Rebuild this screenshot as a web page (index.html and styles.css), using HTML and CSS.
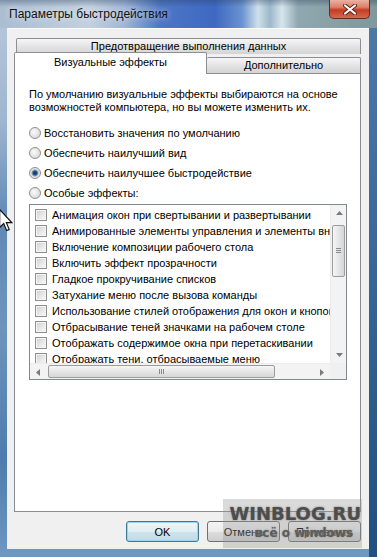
FILE: index.html
```html
<!DOCTYPE html>
<html lang="ru">
<head>
    <meta charset="UTF-8">
    <title>Параметры быстродействия</title>
    <link rel="stylesheet" href="styles.css">
</head>
<body>

    <div class="window">
        <!-- Title bar -->
        <div class="titlebar">
            <span class="title">Параметры быстродействия</span>
            <div class="close">
                <svg width="14" height="11" viewBox="0 0 14 11">
                    <path d="M2 1.5 L12 9.5 M12 1.5 L2 9.5" stroke="#5a2418" stroke-width="4" stroke-linecap="round"/>
                    <path d="M2 1.5 L12 9.5 M12 1.5 L2 9.5" stroke="#fff" stroke-width="2.2" stroke-linecap="round"/>
                </svg>
            </div>
        </div>

        <div class="client">
            <!-- Tabs, two rows -->
            <div class="tabs">
                <div class="tab-row back">
                    <div class="tab">Предотвращение выполнения данных</div>
                </div>
                <div class="tab-row front">
                    <div class="tab active">Визуальные эффекты</div>
                    <div class="tab">Дополнительно</div>
                </div>
            </div>

            <div class="panel">
                <p class="intro">По умолчанию визуальные эффекты выбираются на основе<br>возможностей компьютера, но вы можете изменить их.</p>

                <div class="radios">
                    <div class="radio"><span class="circle"></span>Восстановить значения по умолчанию</div>
                    <div class="radio"><span class="circle"></span>Обеспечить наилучший вид</div>
                    <div class="radio"><span class="circle checked"></span>Обеспечить наилучшее быстродействие</div>
                    <div class="radio"><span class="circle"></span>Особые эффекты:</div>
                </div>

                <div class="listbox">
                    <div class="items">
                        <div class="row"><span class="check"></span>Анимация окон при свертывании и развертывании</div>
                        <div class="row"><span class="check"></span>Анимированные элементы управления и элементы внутри окна</div>
                        <div class="row"><span class="check"></span>Включение композиции рабочего стола</div>
                        <div class="row"><span class="check"></span>Включить эффект прозрачности</div>
                        <div class="row"><span class="check"></span>Гладкое прокручивание списков</div>
                        <div class="row"><span class="check"></span>Затухание меню после вызова команды</div>
                        <div class="row"><span class="check"></span>Использование стилей отображения для окон и кнопок</div>
                        <div class="row"><span class="check"></span>Отбрасывание теней значками на рабочем столе</div>
                        <div class="row"><span class="check"></span>Отображать содержимое окна при перетаскивании</div>
                        <div class="row"><span class="check"></span>Отображать тени, отбрасываемые меню</div>
                    </div>

                    <div class="vscroll">
                        <div class="arrow">
                            <svg width="7" height="4" viewBox="0 0 7 4"><path d="M0 4 L3.5 0 L7 4 Z" fill="#7b7b7b"/></svg>
                        </div>
                        <div class="thumb v">
                            <svg width="5" height="6" viewBox="0 0 5 6"><path d="M0 .5 H5 M0 2.5 H5 M0 4.5 H5" stroke="#8a8a8a"/></svg>
                        </div>
                        <div class="track"></div>
                        <div class="arrow">
                            <svg width="7" height="4" viewBox="0 0 7 4"><path d="M0 0 L3.5 4 L7 0 Z" fill="#7b7b7b"/></svg>
                        </div>
                    </div>

                    <div class="hscroll">
                        <div class="arrow">
                            <svg width="4" height="7" viewBox="0 0 4 7"><path d="M4 0 L0 3.5 L4 7 Z" fill="#7b7b7b"/></svg>
                        </div>
                        <div class="thumb h">
                            <svg width="6" height="5" viewBox="0 0 6 5"><path d="M.5 0 V5 M2.5 0 V5 M4.5 0 V5" stroke="#8a8a8a"/></svg>
                        </div>
                        <div class="track"></div>
                        <div class="arrow">
                            <svg width="4" height="7" viewBox="0 0 4 7"><path d="M0 0 L4 3.5 L0 7 Z" fill="#7b7b7b"/></svg>
                        </div>
                    </div>

                    <div class="corner"></div>
                </div>
            </div>

            <div class="buttons">
                <button class="btn default">OK</button>
                <button class="btn">Отмена</button>
                <button class="btn">Применить</button>
            </div>
        </div>

        <!-- Site watermark over the buttons -->
        <div class="watermark">
            <span class="wm-big">WINBLOG.RU</span>
            <span class="wm-small">всё о windows</span>
        </div>

        <!-- Mouse pointer -->
        <svg class="cursor" width="14" height="23" viewBox="0 0 12 20">
            <path d="M0.5 0.5 V16 L4 12.6 L6.6 18.8 L8.8 17.9 L6.3 11.8 H11 Z" fill="#fff" stroke="#111" stroke-width="1"/>
        </svg>
    </div>

</body>
</html>
```

FILE: styles.css
```css
body {
    margin: 0;
    width: 377px;
    height: 557px;
    overflow: hidden;
    font-family: 'Liberation Sans', Arial, sans-serif;
    font-size: 11px;
    color: #000;
}

/* Aero window frame */
.window {
    position: relative;
    height: 557px;
    display: flex;
    flex-direction: column;
    background:
        linear-gradient(to bottom, #4f7bab, #20507f) right top / 8px 100% no-repeat,
        linear-gradient(to bottom, #b8c9db 0, #9fb6cf 120px, #5f89b5 220px, #6d94bb 330px, #4d7cae 460px, #6f98c1 100%);
}

.titlebar {
    height: 28px;
    flex-shrink: 0;
    display: flex;
    align-items: flex-start;
    padding-left: 9px;
    background:
        linear-gradient(to bottom, rgba(40, 60, 90, 0.35), rgba(40, 60, 90, 0) 7px),
        linear-gradient(to right, #aabdd1 0, #c3d1df 90px, #9fb5d6 125px, #4d76c4 160px, #3d69c2 215px, #6a92d2 242px,
            #cfe0ea 258px, #9cb8cb 270px, #d7e5ec 282px, #8fa7b0 298px, #8aa2a6 330px, #7f979d 377px);
}
.title {
    margin-top: 7px;
    font-size: 12px;
    color: #111;
    text-shadow: 0 0 6px rgba(255, 255, 255, 0.8);
}
.close {
    margin-left: auto;
    margin-right: 7px;
    width: 39px;
    height: 18px;
    display: flex;
    align-items: center;
    justify-content: center;
    border: 1px solid #6b2a1e;
    border-top: none;
    border-radius: 0 0 5px 5px;
    background: linear-gradient(to bottom, #eab1a1 0, #dc8069 40%, #c43c22 55%, #d6694f 100%);
}

.client {
    flex: 1;
    display: flex;
    flex-direction: column;
    margin: 0 8px 8px 7px;
    padding: 9px 8px 0 7px;
    background: #f0f0f0;
    border-top: 1px solid #fafafa;
}

/* Tabs */
.tabs {
    display: flex;
    flex-direction: column;
}
.tab-row {
    display: flex;
}
.tab {
    text-align: center;
    border: 1px solid #8c8e94;
    border-bottom: none;
    border-radius: 2px 2px 0 0;
    background: linear-gradient(to bottom, #f6f6f6, #e4e4e4 50%, #d4d4d4);
    line-height: 15px;
}
.tab-row.back {
    margin: 0 0 0 2px;
}
.tab-row.back .tab {
    flex: 1;
    height: 15px;
}
.tab-row.front {
    height: 20px;
    align-items: flex-end;
    margin-top: -1px;
}
.tab.active {
    width: 191px;
    height: 21px;
    line-height: 18px;
    background: #fff;
    position: relative;
    z-index: 1;
    margin-bottom: -1px;
}
.tab-row.front .tab:not(.active) {
    flex: 1;
    height: 15px;
    border-left: none;
}

.panel {
    box-sizing: border-box;
    height: 439px;
    border: 1px solid #898c95;
    background: #fff;
    padding: 14px 13px 0 14px;
}

.intro {
    margin: 0;
    line-height: 13px;
    white-space: nowrap;
}

.radios {
    margin-top: 9px;
}
.radio {
    height: 20px;
    display: flex;
    align-items: center;
    gap: 3px;
}
.circle {
    width: 10px;
    height: 10px;
    border-radius: 50%;
    border: 1px solid #8f9092;
    background: radial-gradient(circle at 40% 40%, #fbfbfb, #dcdcdc 70%, #c8c8c8);
}
.circle.checked {
    background: radial-gradient(circle, #14345a 0, #25507f 28%, #9fb6cc 45%, #e8e8e8 60%, #d0d0d0);
}

/* List with check boxes */
.listbox {
    margin-top: 1px;
    height: 174px;
    border: 1px solid #828790;
    display: grid;
    grid-template-columns: 1fr 16px;
    grid-template-rows: 1fr 16px;
}
.items {
    overflow: hidden;
    padding-top: 2px;
}
.row {
    height: 16px;
    display: flex;
    align-items: center;
    gap: 5px;
    padding-left: 5px;
    white-space: nowrap;
}
.check {
    flex-shrink: 0;
    width: 10px;
    height: 10px;
    border: 1px solid #8f8f8f;
    background: linear-gradient(135deg, #cfcfcf, #eeeeee 70%, #f8f8f8);
    box-shadow: inset 0 0 0 1px #f4f4f4;
}

.vscroll, .hscroll {
    display: flex;
    background: #f3f3f3;
}
.vscroll {
    flex-direction: column;
    border-left: 1px solid #ececec;
}
.hscroll {
    border-top: 1px solid #ececec;
}
.arrow {
    width: 16px;
    height: 16px;
    flex-shrink: 0;
    display: flex;
    align-items: center;
    justify-content: center;
}
.track {
    flex: 1;
}
.thumb {
    display: flex;
    align-items: center;
    justify-content: center;
    border: 1px solid #9c9c9c;
    border-radius: 2px;
}
.thumb.v {
    height: 50px;
    margin: 4px 1px 0 1px;
    background: linear-gradient(to right, #f6f6f6, #e6e6e6 50%, #d6d6d6);
}
.thumb.h {
    width: 225px;
    margin: 1px 0 1px 2px;
    background: linear-gradient(to bottom, #f6f6f6, #e6e6e6 50%, #d6d6d6);
}
.corner {
    background: #f0f0f0;
}

/* Dialog buttons */
.buttons {
    display: flex;
    justify-content: flex-end;
    gap: 8px;
    padding-top: 9px;
}
.btn {
    width: 73px;
    height: 21px;
    padding: 0;
    font-family: 'Liberation Sans', Arial, sans-serif;
    font-size: 11px;
    color: #000;
    border: 1px solid #707070;
    border-radius: 3px;
    background: linear-gradient(to bottom, #f4f4f4, #ebebeb 50%, #dddddd 51%, #cfcfcf);
}
.btn.default {
    border-color: #3c7a9a;
    background: linear-gradient(to bottom, #eef6f9, #e0edf2 50%, #cfe2ea 51%, #c4dbe4);
    box-shadow: inset 0 0 0 1px #9fd3ea;
}

.watermark {
    position: absolute;
    left: 223px;
    top: 499px;
    width: 139px;
    height: 49px;
    background: rgba(150, 150, 150, 0.35);
    display: flex;
    flex-direction: column;
    align-items: flex-end;
    padding-right: 1px;
    box-sizing: border-box;
}
.wm-big {
    margin-top: 5px;
    font-family: 'DejaVu Sans', sans-serif;
    font-weight: bold;
    font-size: 18px;
    line-height: 19px;
    color: #4d4d4d;
    text-shadow: 0 0 2px #777;
}
.wm-small {
    margin-top: 3px;
    margin-right: 8px;
    font-family: 'DejaVu Sans', sans-serif;
    font-weight: bold;
    font-size: 12px;
    line-height: 14px;
    color: #5c5c5c;
    text-shadow: 0 0 2px #888;
}

.cursor {
    position: absolute;
    left: -1px;
    top: 209px;
}
```
